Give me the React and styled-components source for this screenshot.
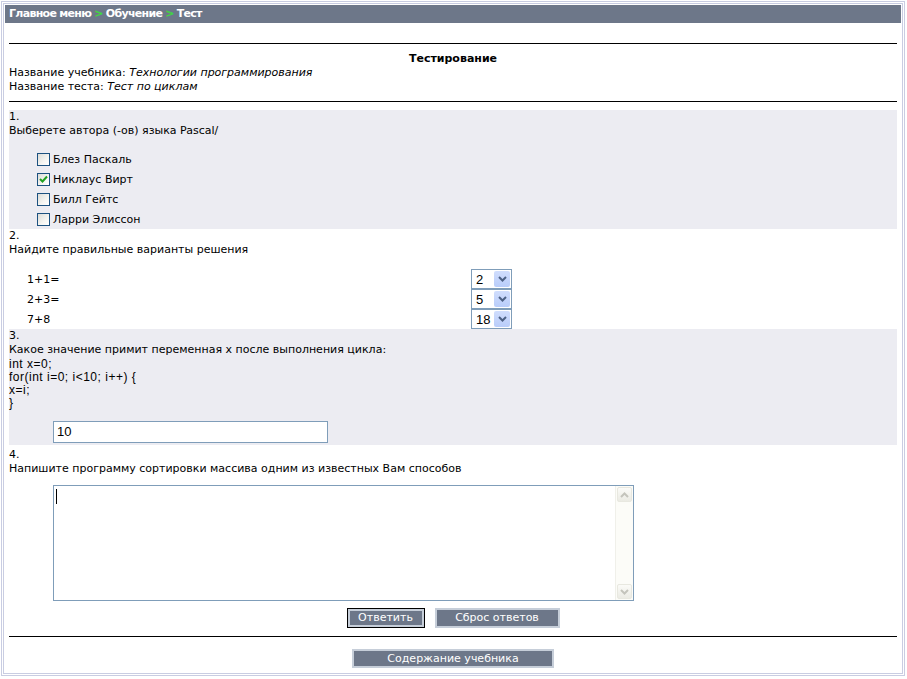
import React from 'react';
import styled, {createGlobalStyle, css} from "styled-components";

const GlobalStyle = createGlobalStyle`
  html, body {
    margin: 0;
    padding: 0;
    background: #ffffff;
  }
  body {
    font-family: "DejaVu Sans", Verdana, sans-serif;
    font-size: 11px;
    color: #000000;
  }
`;

const Frame = styled.div`
  box-sizing: border-box;
  margin: 1px;
  width: 904px;
  height: 675px;
  border: 3px double #c9cde2;
  padding: 1px;
  display: flex;
  flex-direction: column;
`;

const Header = styled.div`
  height: 18px;
  background: #6d7789;
  color: #ffffff;
  font-weight: 700;
  font-size: 11px;
  letter-spacing: -0.7px;
  line-height: 18px;
  padding: 0 4px;
  white-space: nowrap;
`;

const Arrow = styled.span`
  color: #3fd93f;
  margin: 0 3px;
`;

const Content = styled.div`
  padding: 0 4px;
  display: flex;
  flex-direction: column;
`;

const Rule = styled.div`
  height: 1px;
  background: #000000;
  margin: ${props => props.margin || "0"};
`;

const Title = styled.div`
  text-align: center;
  font-weight: 700;
  line-height: 14px;
`;

const Line = styled.div`
  line-height: 14px;
  white-space: nowrap;
`;

const Em = styled.i`
  font-style: italic;
`;

const Question = styled.div`
  display: flex;
  flex-direction: column;
  background: ${props => props.shaded ? "#ececf2" : "#ffffff"};
  ${props => props.pad && css`
    padding: ${props.pad};
  `}
`;

const Options = styled.div`
  display: flex;
  flex-direction: column;
  padding: 11px 0 0 28px;
`;

const OptionRow = styled.label`
  display: flex;
  align-items: center;
  height: 20px;
`;

const Box = styled.span`
  box-sizing: border-box;
  width: 13px;
  height: 13px;
  border: 1px solid #1c5180;
  background: linear-gradient(135deg, #dcdcd7 0%, #f5f5f2 60%, #ffffff 100%);
  margin-right: 3px;
  display: flex;
  align-items: center;
  justify-content: center;
`;

const MatchList = styled.div`
  display: flex;
  flex-direction: column;
  padding-top: 12px;
`;

const MatchRow = styled.div`
  display: grid;
  grid-template-columns: 444px auto;
  align-items: center;
  height: 20px;
  padding-left: 18px;
`;

const Select = styled.div`
  box-sizing: border-box;
  width: 41px;
  height: 20px;
  border: 1px solid #7f9db9;
  background: #ffffff;
  display: flex;
  align-items: center;
  justify-content: space-between;
  padding: 1px;
  font-family: "Liberation Sans", Arial, sans-serif;
  font-size: 13px;
`;

const SelectValue = styled.span`
  padding-left: 3px;
`;

const SelectButton = styled.span`
  width: 16px;
  height: 16px;
  border-radius: 2px;
  background: linear-gradient(180deg, #d0ddfd 0%, #b9cdfa 100%);
  display: flex;
  align-items: center;
  justify-content: center;
`;

const Code = styled.div`
  font-family: "Liberation Sans", Tahoma, Arial, sans-serif;
  font-size: 12px;
  letter-spacing: 0.5px;
  line-height: 13px;
  margin-top: 1px;
`;

const TextInput = styled.div`
  box-sizing: border-box;
  width: 275px;
  height: 22px;
  margin: 11px 0 0 44px;
  border: 1px solid #7f9db9;
  background: #ffffff;
  font-family: "Liberation Sans", Arial, sans-serif;
  font-size: 13px;
  line-height: 20px;
  padding-left: 3px;
`;

const TextArea = styled.div`
  box-sizing: border-box;
  width: 581px;
  height: 116px;
  margin: 9px 0 0 44px;
  border: 1px solid #7f9db9;
  background: #ffffff;
  display: flex;
`;

const Caret = styled.span`
  display: block;
  width: 1px;
  height: 15px;
  background: #000000;
  margin: 3px 0 0 2px;
`;

const TextSpace = styled.div`
  flex: 1;
`;

const ScrollTrack = styled.div`
  width: 17px;
  background: #fcfcf8;
  border-left: 1px solid #f0f0ea;
  display: flex;
  flex-direction: column;
  justify-content: space-between;
`;

const ScrollButton = styled.div`
  box-sizing: border-box;
  width: 15px;
  height: 15px;
  margin: 1px;
  border: 1px solid #e8e8e0;
  border-radius: 2px;
  background: linear-gradient(180deg, #fbfbf8 0%, #ebebe4 100%);
  display: flex;
  align-items: center;
  justify-content: center;
`;

const ButtonBar = styled.div`
  display: flex;
  justify-content: center;
  gap: 10px;
  padding: ${props => props.pad || "0"};
`;

const Button = styled.button`
  box-sizing: border-box;
  height: ${props => props.tall ? "19px" : "20px"};
  width: ${props => props.width};
  padding: 0;
  background: #6d7789;
  color: #ffffff;
  border: 2px solid #c6ced9;
  font-family: "DejaVu Sans", Verdana, sans-serif;
  font-size: 11px;
  line-height: 14px;
  cursor: pointer;

  ${props => props.focused && css`
    border-width: 3px;
    outline: 1px solid #000000;
    outline-offset: -1px;
  `}
`;

const Chevron = ({color}) => (
    <svg width="9" height="6" viewBox="0 0 9 6">
        <path d="M1 1 L4.5 4.5 L8 1" fill="none" stroke={color} strokeWidth="2"/>
    </svg>
);

const ChevronUp = ({color}) => (
    <svg width="9" height="6" viewBox="0 0 9 6">
        <path d="M1 5 L4.5 1.5 L8 5" fill="none" stroke={color} strokeWidth="2"/>
    </svg>
);

const Check = () => (
    <svg width="9" height="8" viewBox="0 0 9 8">
        <path d="M1 4 L3.5 6.5 L8 1.5" fill="none" stroke="#21a121" strokeWidth="2"/>
    </svg>
);

const options = [
    {label: "Блез Паскаль", checked: false},
    {label: "Никлаус Вирт", checked: true},
    {label: "Билл Гейтс", checked: false},
    {label: "Ларри Элиссон", checked: false},
];

const matches = [
    {label: "1+1=", value: "2"},
    {label: "2+3=", value: "5"},
    {label: "7+8", value: "18"},
];

function App() {
    return (
        <>
            <GlobalStyle/>
            <Frame>
                <Header>
                    Главное меню<Arrow>&gt;</Arrow>Обучение<Arrow>&gt;</Arrow>Тест
                </Header>
                <Content>
                    <Rule margin="20px 0 8px"/>
                    <Title>Тестирование</Title>
                    <Line>Название учебника: <Em>Технологии программирования</Em></Line>
                    <Line>Название теста: <Em>Тест по циклам</Em></Line>
                    <Rule margin="7px 0 8px"/>

                    <Question shaded>
                        <Line>1.</Line>
                        <Line>Выберете автора (-ов) языка Pascal/</Line>
                        <Options>
                            {options.map(o => (
                                <OptionRow key={o.label}>
                                    <Box>{o.checked && <Check/>}</Box>
                                    {o.label}
                                </OptionRow>
                            ))}
                        </Options>
                    </Question>

                    <Question>
                        <Line>2.</Line>
                        <Line>Найдите правильные варианты решения</Line>
                        <MatchList>
                            {matches.map(m => (
                                <MatchRow key={m.label}>
                                    <span>{m.label}</span>
                                    <Select>
                                        <SelectValue>{m.value}</SelectValue>
                                        <SelectButton><Chevron color="#4d6185"/></SelectButton>
                                    </Select>
                                </MatchRow>
                            ))}
                        </MatchList>
                    </Question>

                    <Question shaded pad="0 0 2px">
                        <Line>3.</Line>
                        <Line>Какое значение примит переменная x после выполнения цикла:</Line>
                        <Code>
                            int x=0;<br/>
                            for(int i=0; i&lt;10; i++) {"{"}<br/>
                            x=i;<br/>
                            {"}"}
                        </Code>
                        <TextInput>10</TextInput>
                    </Question>

                    <Question pad="3px 0 0">
                        <Line>4.</Line>
                        <Line>Напишите программу сортировки массива одним из известных Вам способов</Line>
                        <TextArea>
                            <Caret/>
                            <TextSpace/>
                            <ScrollTrack>
                                <ScrollButton><ChevronUp color="#c4c4bc"/></ScrollButton>
                                <ScrollButton><Chevron color="#c4c4bc"/></ScrollButton>
                            </ScrollTrack>
                        </TextArea>
                    </Question>

                    <ButtonBar pad="7px 0 0">
                        <Button focused width="78px">Ответить</Button>
                        <Button width="125px">Сброс ответов</Button>
                    </ButtonBar>
                    <Rule margin="8px 0 12px"/>
                    <ButtonBar>
                        <Button tall width="202px">Содержание учебника</Button>
                    </ButtonBar>
                </Content>
            </Frame>
        </>
    );
}

export default App;
